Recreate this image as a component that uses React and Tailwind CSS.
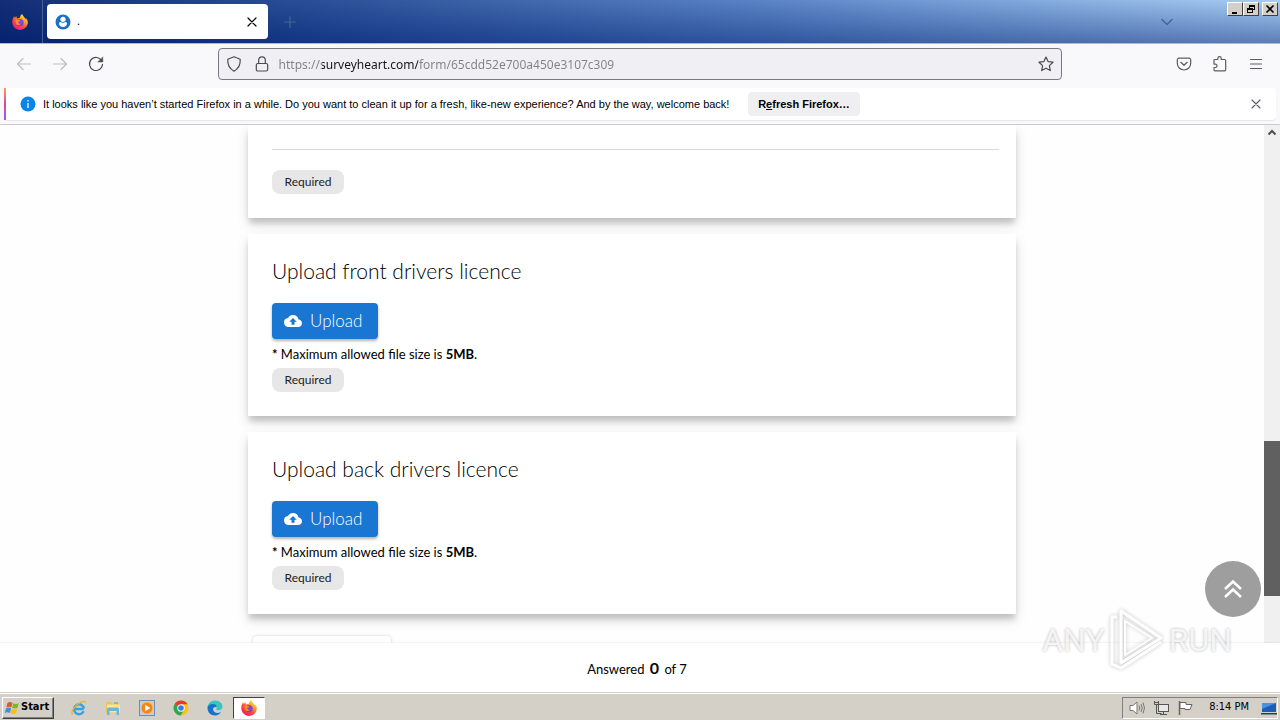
import { MdCloudUpload } from 'react-icons/md';

const FirefoxIcon = ({ className }) => (
  <svg viewBox="0 0 16 16" className={className} aria-hidden="true">
    <defs>
      <linearGradient id="fxBody" x1="0.85" y1="0.05" x2="0.2" y2="0.95">
        <stop offset="0" stopColor="#fff44f" />
        <stop offset="0.3" stopColor="#ffa52d" />
        <stop offset="0.6" stopColor="#ff4f3b" />
        <stop offset="1" stopColor="#f0136e" />
      </linearGradient>
      <radialGradient id="fxGlobe" cx="0.5" cy="0.3" r="0.7">
        <stop offset="0" stopColor="#a03ee0" />
        <stop offset="1" stopColor="#5b4be0" />
      </radialGradient>
    </defs>
    <path
      d="M15.4 6.2c-.4-1-1.200-2-1.800-2.300.5 1 .8 1.900.9 2.600-1-2.400-2.600-3.300-3.900-5.500C10.400.7 10.300.4 10.200 0 8.600 1 8 2.700 7.900 3.700c-1 0-1.900.4-2.600.9-.5-.4-.8-1.300-.6-2.300-.9.400-1.500 1-2 1.600-.3-.4-.3-1.800-.3-2C1.700 2.400.4 4.700.3 7.500c-.3 4.600 3.300 8.400 7.700 8.400 4 0 7.200-2.800 7.800-6.600.1-1 0-2.200-.4-3.100z"
      fill="url(#fxBody)"
    />
    <circle cx="8" cy="8.700" r="3.600" fill="url(#fxGlobe)" />
    <path d="M3.300 6.300c1-1 2.500-.8 3.200-.3.600.1 1.500.1 1.700.3 0 .8-1.500 1-1.900 1.700-.2 1.500 1 2.200 2.500 1.700-1.300 1.900-4.400 1.500-5-.8-.2-.9-.1-1.800-.5-2.600z" fill="#ff8a2b" />
  </svg>
);

const ProfileFavicon = () => (
  <svg viewBox="0 0 16 16" className="size-4 shrink-0" aria-hidden="true">
    <circle cx="8" cy="8" r="7.500" fill="#1b70c4" />
    <circle cx="8" cy="5.300" r="2.600" fill="#fff" />
    <path d="M4 9.500c0-1 .8-1.700 1.800-1.600.6.600 1.300.9 2.200.9s1.600-.3 2.200-.9c1-.1 1.800.6 1.800 1.600 0 2.100-1.800 3.500-4 3.500s-4-1.400-4-3.500z" fill="#fff" />
  </svg>
);

const LineIcon = ({ children, className = 'size-4' }) => (
  <svg viewBox="0 0 16 16" className={className} fill="none" stroke="currentColor" strokeWidth="1.200" strokeLinecap="round" strokeLinejoin="round" aria-hidden="true">
    {children}
  </svg>
);

const WindowButton = ({ label, children }) => (
  <button aria-label={label} className="flex h-[14px] w-4 items-center justify-center border border-t-white border-l-white border-r-[#404040] border-b-[#404040] bg-[#d4d0c8] text-black">
    <svg viewBox="0 0 12 10" className="h-[10px] w-3" fill="none" stroke="currentColor" shapeRendering="crispEdges" aria-hidden="true">
      {children}
    </svg>
  </button>
);

const TitleBar = () => (
  <div className="flex h-[43px] shrink-0 bg-[linear-gradient(to_bottom,rgba(255,255,255,0.04),rgba(0,30,110,0.45)),linear-gradient(to_right,#0a2670_0%,#1f4590_22%,#5480c4_60%,#a6ccf4_100%)]">
    <div className="flex w-[43px] items-center justify-center border-r border-[#46609a] pr-[3px]">
      <FirefoxIcon className="size-4" />
    </div>
    <div className="my-1 ml-1 flex w-[221px] items-center rounded bg-white pr-2 pl-2">
      <ProfileFavicon />
      <span className="ml-[6px] flex-1 text-[11px] text-black">.</span>
      <button aria-label="Close tab" className="text-black">
        <LineIcon><path d="M4 4l8 8M12 4l-8 8" /></LineIcon>
      </button>
    </div>
    <button aria-label="New tab" className="ml-[14px] text-[#4a638c]">
      <LineIcon><path d="M8 2.500v11M2.500 8h11" /></LineIcon>
    </button>
    <button aria-label="List all tabs" className="mr-[52px] ml-auto text-[#4a6694]">
      <LineIcon className="size-4"><path d="M3 5.500l5 5 5-5" strokeWidth="1.500" /></LineIcon>
    </button>
    <div className="mt-[2px] mr-[2px] flex">
      <WindowButton label="Minimize"><path d="M3 8.500h5" strokeWidth="2" /></WindowButton>
      <WindowButton label="Restore">
        <path d="M4.500 4V1.500h5v4H8" />
        <path d="M4 1.500h6M2 4.500h6" strokeWidth="2" />
        <path d="M2.500 4.500h5v4h-5z" />
      </WindowButton>
      <div className="w-[3px]" />
      <WindowButton label="Close">
        <path d="M2.500 1.500l7 7M9.500 1.500l-7 7" strokeWidth="1.700" shapeRendering="auto" />
      </WindowButton>
    </div>
  </div>
);

const Toolbar = () => (
  <div className="flex h-[45px] shrink-0 items-center border-t border-[#b4b8c8] bg-[#f9f9fb] pb-[4px] text-[#5b5b66]">
    <div className="flex flex-1 gap-5 pl-4 text-[#bdbdc2]">
      <button aria-label="Back"><LineIcon><path d="M14.500 8H1.500M7 2.500L1.500 8 7 13.500" /></LineIcon></button>
      <button aria-label="Forward"><LineIcon><path d="M1.500 8h13M9 2.500L14.500 8 9 13.500" /></LineIcon></button>
      <button aria-label="Reload" className="text-[#4b4b55]">
        <LineIcon>
          <path d="M13.800 5A6.500 6.500 0 1 0 14.500 8.300" />
          <path d="M14.800 1.200v4.800h-4.800z" fill="currentColor" strokeWidth="0.500" />
        </LineIcon>
      </button>
    </div>
    <div className="flex h-8 w-[66%] items-center rounded border border-[#78787d] bg-[#f0f0f4] px-[7px] text-[#4b4b55]">
      <LineIcon className="size-4 shrink-0"><path d="M8 .8l6.200 2.400c.4 5-1.200 9-6.200 12-5-3-6.600-7-6.200-12z" /></LineIcon>
      <LineIcon className="ml-3 size-4 shrink-0"><path d="M4.700 7.500V4.200a3.300 3.300 0 0 1 6.600 0v3.300" /><rect x="2.300" y="7.500" width="11.400" height="7.500" rx="1.500" /></LineIcon>
      <input
        type="text"
        aria-label="Address"
        defaultValue="https://surveyheart.com/form/65cdd52e700a450e3107c309"
        className="ml-[9px] flex-1 bg-[linear-gradient(to_right,#808086_43px,#15141a_43px,#15141a_139px,#808086_139px)] bg-clip-text pt-px font-['Noto_Sans',sans-serif] text-[12px] text-transparent outline-none"
      />
      <button aria-label="Bookmark this page">
        <LineIcon><path d="M8 1l2.100 4.600 4.900.6-3.600 3.400.9 5L8 12.200l-4.300 2.400.9-5L1 6.200l4.900-.6z" /></LineIcon>
      </button>
    </div>
    <div className="flex flex-1 justify-end gap-5 pr-4">
      <button aria-label="Save to Pocket">
        <LineIcon><path d="M3 2.200h10a1.700 1.700 0 0 1 1.700 1.700v3.400a6.700 6.700 0 0 1-13.400 0V3.900A1.700 1.700 0 0 1 3 2.200zM4.800 6.300L8 9.300l3.200-3" /></LineIcon>
      </button>
      <button aria-label="Extensions">
        <LineIcon><path d="M2 6V4.500a1 1 0 0 1 1-1h2.800V2.400a1.700 1.700 0 0 1 3.400 0v1.100h3.300a1.200 1.200 0 0 1 1.200 1.200v9.100a1 1 0 0 1-1 1H3a1 1 0 0 1-1-1V11.500h1.300a1.700 1.700 0 0 0 0-3.400H2V6" /></LineIcon>
      </button>
      <button aria-label="Open application menu">
        <LineIcon><path d="M2.500 3.500h11M2.500 8h11M2.500 12.500h11" /></LineIcon>
      </button>
    </div>
  </div>
);

const Notification = () => (
  <div className="shrink-0 border-b border-[#cccccc] bg-[#f9f9fb] pb-1 font-['Liberation_Sans',sans-serif] text-[11px] text-black">
    <div className="mx-1 flex h-8 items-center rounded bg-white shadow-[0_1px_1px_rgba(0,0,0,0.08)]">
      <div className="h-full w-[2px] bg-linear-to-b from-[#ff9a56] via-[#e0409a] to-[#9059ff]" />
      <svg viewBox="0 0 16 16" className="ml-[14px] size-4" aria-hidden="true">
        <circle cx="8" cy="8" r="7.500" fill="#0a84e8" />
        <path d="M8 7v5M8 4v1.500" stroke="#fff" strokeWidth="1.300" />
      </svg>
      <p className="ml-[7px] w-[705px] whitespace-nowrap">
        It looks like you haven’t started Firefox in a while. Do you want to clean it up for a fresh, like-new experience? And by the way, welcome back!
      </p>
      <button className="h-6 w-28 rounded bg-[#efeff1] font-bold">
        R<span className="underline">e</span>fresh Firefox…
      </button>
      <button aria-label="Close notification" className="mr-3 ml-auto text-[#5b5b66]">
        <LineIcon><path d="M4 4l8 8M12 4l-8 8" strokeWidth="1.100" /></LineIcon>
      </button>
    </div>
  </div>
);

const RequiredChip = () => (
  <span className="flex h-6 w-[72px] items-center justify-center rounded-lg bg-[#e7e7e7] text-[12px] text-[#222222]">Required</span>
);

const Card = ({ children }) => (
  <section className="bg-white px-6 pt-6 pb-6 shadow-[0_6px_6px_-1px_rgba(0,0,0,0.16),0_6px_12px_rgba(0,0,0,0.12)]">
    {children}
  </section>
);

const UploadCard = ({ title }) => (
  <Card>
    <h2 className="mb-5 text-[21px] leading-[25px] font-light">{title}</h2>
    <button className="flex h-9 w-[106px] items-center gap-2 rounded bg-[#1976d2] pl-3 text-[17px] font-light text-white shadow-[0_2px_3px_rgba(0,0,0,0.3)]">
      <MdCloudUpload className="size-[18px]" />
      Upload
    </button>
    <p className="mt-[5px] mb-1 text-[13px] leading-5">
      <b>*</b> Maximum allowed file size is <b>5MB</b>.
    </p>
    <RequiredChip />
  </Card>
);

const Watermark = () => (
  <div className="pointer-events-none absolute right-12 bottom-[21px] flex h-[62px] items-center gap-1 font-['Roboto',sans-serif] text-[32px] leading-none text-white/80 [text-shadow:0_0_3px_rgba(0,0,0,0.3)]">
    <span>ANY</span>
    <svg viewBox="0 0 56 62" className="h-[62px] w-14 opacity-80 drop-shadow-[0_0_2px_rgba(0,0,0,0.3)]" fill="none" stroke="#fff" strokeWidth="3" strokeLinejoin="round" aria-hidden="true">
      <path d="M12 2v52l40-25z" />
      <path d="M8 8H3v47l9 4 40-26" />
      <path d="M16 12v34l27-17z" strokeWidth="2" />
    </svg>
    <span>RUN</span>
  </div>
);

const FormPage = () => (
  <div className="relative flex min-h-0 flex-1 flex-col font-['Lato','Noto_Sans',sans-serif] text-black">
    <div className="flex min-h-0 flex-1">
      <main className="min-w-0 flex-1 overflow-hidden bg-[#fefefe]">
        <div className="mx-auto flex w-full max-w-3xl flex-col gap-4">
          <Card>
            <div className="-mr-[7px] mb-5 border-t border-[#d9d9d9]" />
            <RequiredChip />
          </Card>
          <UploadCard title="Upload front drivers licence" />
          <UploadCard title="Upload back drivers licence" />
          <button aria-label="Submit" className="mt-[6px] ml-[5px] h-10 w-[138px] rounded bg-white shadow-[0_0_3px_rgba(0,0,0,0.2)]" />
        </div>
      </main>
      <div className="flex w-4 shrink-0 flex-col bg-[#f0f0f0]">
        <svg viewBox="0 0 16 16" className="size-4" fill="none" stroke="#505050" strokeWidth="2" aria-hidden="true">
          <path d="M4.500 9.500L8 6l3.500 3.500" />
        </svg>
        <div className="flex-[300]" />
        <div className="flex-[155] bg-[#606060]" />
        <div className="flex-[47]" />
      </div>
    </div>
    <footer className="z-10 flex h-[49px] shrink-0 items-center justify-center bg-white pr-[6px] text-[13px] shadow-[0_0_2px_rgba(0,0,0,0.12)]">
      <span>Answered <b className="mx-[2px] text-[16px]">0</b> of 7</span>
    </footer>
    <button aria-label="Scroll to top" className="absolute right-[19px] bottom-[75px] flex size-14 items-center justify-center rounded-full bg-[#9e9e9e]">
      <svg viewBox="0 0 24 24" className="size-6" fill="none" stroke="#fff" strokeWidth="2.500" aria-hidden="true">
        <path d="M4 12l8-7.500 8 7.500M4 20l8-7.500 8 7.500" />
      </svg>
    </button>
    <div className="pointer-events-none absolute inset-0 z-20"><Watermark /></div>
  </div>
);

const IeIcon = () => (
  <svg viewBox="0 0 16 16" className="size-4" fill="none" aria-hidden="true">
    <path d="M12.800 9H4.200M12.600 11.300A5 5 0 1 1 13 8.500" stroke="#35a3e0" strokeWidth="2.500" />
    <path d="M1.500 14.500C-.5 12 4 5 9.500 2.300c3-1.500 5.300-1.300 5 .8" stroke="#eab42e" strokeWidth="1.300" />
  </svg>
);

const ExplorerIcon = () => (
  <svg viewBox="0 0 16 16" className="size-4" aria-hidden="true">
    <path d="M1 2h5l1 1.500h7V13H1z" fill="#e9c45c" />
    <path d="M2 4.500h13v8H2z" fill="#f8e49c" />
    <path d="M2 15V9.500C2 8 3 7.500 4.500 7.500h7c1.500 0 2.500.5 2.500 2V15h-2.500v-4h-7v4z" fill="#69b7dc" />
    <path d="M9 3h4" stroke="#50a860" />
  </svg>
);

const MediaIcon = () => (
  <svg viewBox="0 0 16 16" className="size-4" aria-hidden="true">
    <rect x="0.500" y="0.500" width="15" height="15" fill="#b7d3ec" stroke="#5f91c4" />
    <rect x="2" y="2" width="12" height="12" fill="#f5c080" />
    <circle cx="8" cy="8" r="5.500" fill="#f28518" />
    <path d="M6.200 4.800v6.400L11.300 8z" fill="#fff" />
  </svg>
);

const ChromeIcon = () => (
  <svg viewBox="0 0 16 16" className="size-4" aria-hidden="true">
    <circle cx="8" cy="8" r="7.500" fill="#fbc116" />
    <path d="M8 8L1.500 4.200A7.500 7.500 0 0 1 14.500 4.200H8z" fill="#e33b2e" />
    <path d="M8 8L1.500 4.200A7.500 7.500 0 0 0 7.700 15.500L11 10z" fill="#2da94f" />
    <circle cx="8" cy="8" r="3.700" fill="#fff" />
    <circle cx="8" cy="8" r="2.800" fill="#3b7de8" />
  </svg>
);

const EdgeIcon = () => (
  <svg viewBox="0 0 16 16" className="size-4" aria-hidden="true">
    <path d="M.5 8C.5 3.500 4 .5 8 .5c4.500 0 7.500 3 7.500 6 0 2.500-2 3.700-4 3.700-1.500 0-2.300-.5-2.300-1 0-.4.500-.7.500-1.700C9.700 6 8.400 5 6.500 5 3.500 5 .5 6.500.5 8z" fill="#35c6c0" />
    <path d="M.5 8c0-2.500 3-4 5.500-4 2 0 3.700 1 3.700 3C6.500 6.500 5.500 8.500 6.300 10.500c1 2.300 4 3.200 7.700 1.500-1.200 2.200-3.500 3.500-6 3.500C3.500 15.500.5 12 .5 8z" fill="#1672cd" />
  </svg>
);

const quickLaunch = [
  { name: 'Internet Explorer', Icon: IeIcon },
  { name: 'Windows Explorer', Icon: ExplorerIcon },
  { name: 'Media Player', Icon: MediaIcon },
  { name: 'Chrome', Icon: ChromeIcon },
  { name: 'Edge', Icon: EdgeIcon }
];

const Taskbar = () => (
  <div className="z-10 flex h-7 shrink-0 items-center border-t border-[#d4d0c8] bg-[#d4d0c8] pt-[2px] font-['DejaVu_Sans_Condensed','DejaVu_Sans',sans-serif] text-[11px] text-black shadow-[inset_0_1px_0_#ffffff]">
    <button className="ml-[2px] flex h-[22px] w-[52px] items-center border border-t-white border-l-white border-r-[#404040] border-b-[#404040] pl-[2px] font-bold shadow-[inset_-1px_-1px_0_#808080]">
      <svg viewBox="0 0 16 16" className="size-4 shrink-0" aria-hidden="true">
        <path d="M2.500 3C4 1.800 5.800 1.800 7.500 3L6.300 7.500C4.700 6.400 3 6.400 1.300 7.500z" fill="#ea5425" />
        <path d="M8.300 3.300c1.700 1 3.500 1 5.500-.2l-1.200 4.600c-1.900 1.100-3.700 1-5.500 0z" fill="#7ab929" />
        <path d="M1 8.500c1.700-1.200 3.400-1.200 5.100 0L4.900 13C3.300 11.900 1.500 11.900-.2 13z" fill="#3f8fdd" />
        <path d="M6.900 8.800c1.700 1 3.500 1 5.500-.2l-1.200 4.600c-1.900 1.100-3.700 1-5.500 0z" fill="#f8bd1f" />
      </svg>
      Start
    </button>
    <div className="ml-2 flex pr-px">
      {quickLaunch.map(({ name, Icon }) => (
        <button key={name} aria-label={name} className="flex w-[34px] justify-center">
          <Icon />
        </button>
      ))}
    </div>
    <button aria-label="Firefox" className="flex h-[22px] w-8 items-center justify-center border border-t-[#404040] border-l-[#404040] border-r-white border-b-white bg-white">
      <FirefoxIcon className="size-4" />
    </button>
    <div className="mr-[2px] ml-auto flex h-[22px] items-center border border-t-[#808080] border-l-[#808080] border-r-white border-b-white pl-[6px]">
      <svg viewBox="0 0 16 16" className="size-4" fill="none" stroke="#777777" aria-hidden="true">
        <path d="M1 5.500h3L8 2v12l-4-3.500H1z" fill="#fff" />
        <path d="M10 5.500q1.500 2.500 0 5M12 4q2.500 4 0 8M14 2.500q3 5.500 0 11" />
      </svg>
      <svg viewBox="0 0 16 16" className="ml-2 size-4" fill="none" stroke="#555555" aria-hidden="true">
        <rect x="5.500" y="4.500" width="10" height="7" fill="#e8e8e8" />
        <path d="M7 14.500h7M10.500 12v2M1.500 1v3.500h4V1M3.500 4.500v9h5" />
        <path d="M1 2.500h5" />
      </svg>
      <svg viewBox="0 0 16 16" className="ml-2 size-4" fill="none" stroke="#666666" aria-hidden="true">
        <path d="M2.500 1v14" strokeWidth="1.500" />
        <path d="M3 2.500h6v2h6l-2 5H8v-1H3z" fill="#fff" />
      </svg>
      <span className="ml-4">8:14 PM</span>
      <svg viewBox="0 0 16 16" className="ml-3 size-4" aria-hidden="true">
        <path d="M1 3h14v9H1z" fill="#1c5fb8" />
        <path d="M1 3h14L1 9z" fill="#4b93df" />
        <path d="M0 13h16v1.500H0z" fill="#25405f" />
      </svg>
    </div>
  </div>
);

const App = () => (
  <div className="flex h-screen flex-col overflow-hidden bg-white">
    <TitleBar />
    <Toolbar />
    <Notification />
    <FormPage />
    <Taskbar />
  </div>
);

export default App;
